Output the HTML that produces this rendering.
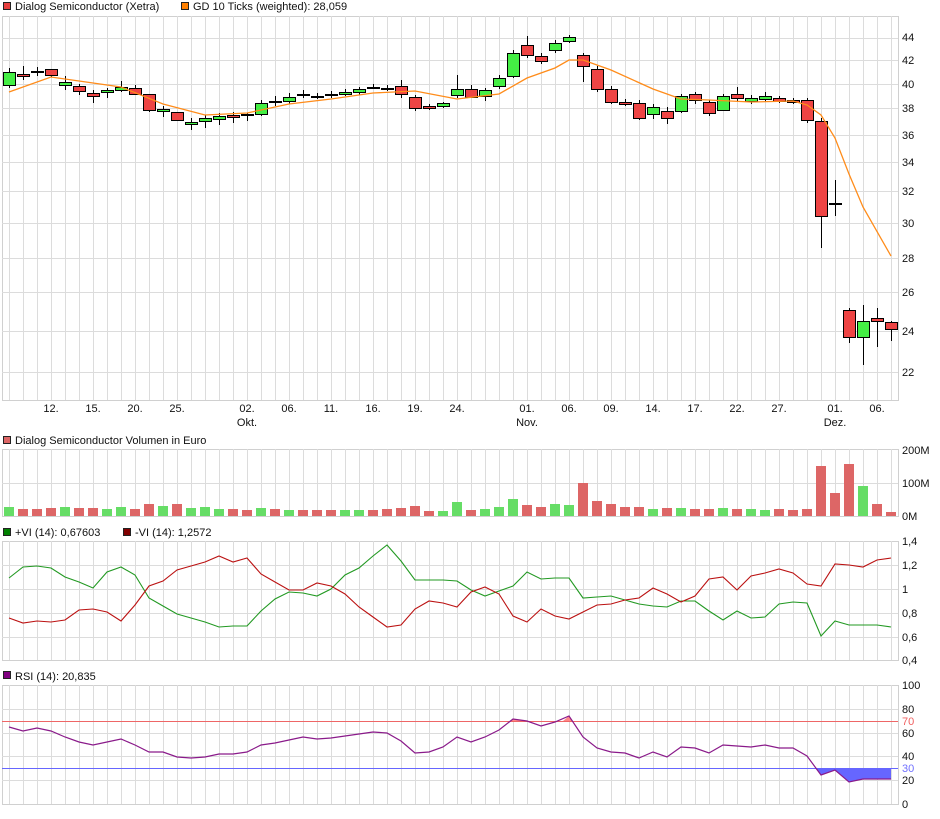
<!DOCTYPE html>
<html><head><meta charset="utf-8"><style>
html,body{margin:0;padding:0;background:#fff;}
body{width:940px;height:814px;overflow:hidden;font-family:"Liberation Sans",sans-serif;}
svg text{font-family:"Liberation Sans",sans-serif;font-size:11px;fill:#111;}
</style></head><body>
<svg id="c" width="940" height="814" xmlns="http://www.w3.org/2000/svg">
<g id="grid" stroke="#dcdcdc" stroke-width="1" fill="none"></g>
<g id="lay"></g>
<!-- legends -->
<rect x="3.5" y="2.5" width="7" height="7" fill="#e84040" stroke="#222"/>
<text x="15" y="10">Dialog Semiconductor (Xetra)</text>
<rect x="181.5" y="2.5" width="7" height="7" fill="#ff8000" stroke="#222"/>
<text x="193" y="10">GD 10 Ticks (weighted): 28,059</text>
<rect x="3.5" y="436.5" width="7" height="7" fill="#dd6666" stroke="#222"/>
<text x="15" y="444">Dialog Semiconductor Volumen in Euro</text>
<rect x="3.5" y="528.5" width="7" height="7" fill="#008000" stroke="#222"/>
<text x="15" y="536">+VI (14): 0,67603</text>
<rect x="123.5" y="528.5" width="7" height="7" fill="#800000" stroke="#222"/>
<text x="135" y="536">-VI (14): 1,2572</text>
<rect x="3.5" y="671.5" width="7" height="7" fill="#800080" stroke="#222"/>
<text x="15" y="680">RSI (14): 20,835</text>
<!-- main y labels -->
<g>
<text x="902" y="41">44</text><text x="902" y="64">42</text><text x="902" y="88">40</text>
<text x="902" y="112">38</text><text x="902" y="139">36</text><text x="902" y="166">34</text>
<text x="902" y="195">32</text><text x="902" y="227">30</text><text x="902" y="262">28</text>
<text x="902" y="296">26</text><text x="902" y="335">24</text><text x="902" y="376">22</text>
</g>
<g text-anchor="middle">
<text x="51" y="412" text-anchor="middle">12.</text><text x="93" y="412" text-anchor="middle">15.</text>
<text x="135" y="412" text-anchor="middle">20.</text><text x="177" y="412" text-anchor="middle">25.</text>
<text x="247" y="412" text-anchor="middle">02.</text><text x="289" y="412" text-anchor="middle">06.</text>
<text x="331" y="412" text-anchor="middle">11.</text><text x="373" y="412" text-anchor="middle">16.</text>
<text x="415" y="412" text-anchor="middle">19.</text><text x="457" y="412" text-anchor="middle">24.</text>
<text x="527" y="412" text-anchor="middle">01.</text><text x="569" y="412" text-anchor="middle">06.</text>
<text x="611" y="412" text-anchor="middle">09.</text><text x="653" y="412" text-anchor="middle">14.</text>
<text x="695" y="412" text-anchor="middle">17.</text><text x="737" y="412" text-anchor="middle">22.</text>
<text x="779" y="412" text-anchor="middle">27.</text><text x="835" y="412" text-anchor="middle">01.</text>
<text x="877" y="412" text-anchor="middle">06.</text>
<text x="247" y="426" text-anchor="middle">Okt.</text><text x="527" y="426" text-anchor="middle">Nov.</text>
<text x="835" y="426" text-anchor="middle">Dez.</text>
</g>
<text x="902" y="454">200M</text><text x="902" y="487">100M</text><text x="902" y="520">0M</text>
<text x="902" y="545">1,4</text><text x="902" y="569">1,2</text><text x="902" y="593">1</text>
<text x="902" y="617">0,8</text><text x="902" y="641">0,6</text><text x="902" y="664">0,4</text>
<text x="902" y="689">100</text><text x="902" y="713">80</text><text x="902" y="725" style="fill:#f06060">70</text>
<text x="902" y="737">60</text><text x="902" y="760">40</text><text x="902" y="772" style="fill:#7070ff">30</text>
<text x="902" y="784">20</text><text x="902" y="808">0</text>
</svg>
<script>
var NS="http://www.w3.org/2000/svg",svg=document.getElementById('c'),G=document.getElementById('grid'),L=document.getElementById('lay');
function el(p,t,a){var e=document.createElementNS(NS,t);for(var k in a)e.setAttribute(k,a[k]);p.appendChild(e);return e;}
var panels=[[16,400,[38,60,84,108,135,162,191,223,258,292,331,372]],[449,516,[483]],[541,660,[565,589,613,637]],[685,804,[709,733,756,780]]];
panels.forEach(function(p){
 el(G,'rect',{x:2.5,y:p[0]+.5,width:896,height:p[1]-p[0],stroke:'#d0d0d0'});
 for(var i=0;i<64;i++){var x=9+14*i+.5;el(G,'line',{x1:x,x2:x,y1:p[0],y2:p[1]});}
 p[2].forEach(function(y){el(G,'line',{x1:2,x2:898,y1:y+.5,y2:y+.5});});
});
// candles: [open,close,high,low] in y coords
var C=[[85,72,68,88],[74,76,66,80],[71,72,67,76],[69,75,69,77],[85,82,76,90],[86,91,84,95],[93,96,90,103],[92,90,88,98],[90,87,81,92],[88,94,85,95],
[94,110,94,112],[111,109,106,117],[112,120,112,121],[124,122,118,130],[121,118,115,128],[119,116,113,125],[115,117,112,123],[114,115,113,121],[114,103,100,116],[101,102,96,106],
[101,97,93,104],[94,95,90,98],[96,96,93,99],[94,94,91,98],[94,92,89,96],[92,89,87,95],[87,87,84,89],[88,88,85,91],[86,94,80,98],[97,108,95,111],
[106,108,104,110],[106,103,102,108],[95,89,75,98],[89,97,85,98],[96,90,88,101],[86,78,75,89],[76,53,50,78],[45,55,36,58],[56,61,53,64],[50,43,40,53],
[41,37,35,43],[55,66,53,82],[69,89,66,92],[89,102,86,104],[102,104,99,106],[103,118,100,120],[114,107,104,119],[111,118,107,124],[111,96,94,113],[94,100,92,104],
[102,113,100,116],[110,96,94,111],[94,98,87,102],[101,98,95,104],[99,96,92,102],[98,101,96,103],[100,102,98,104],[100,120,98,123],[121,216,118,248],[203,203,180,216],
[310,337,308,343],[337,321,305,365],[318,321,308,347],[322,329,321,341]];
var ma="9,92 51,77 79,81 121,87 163,104 205,115 247,113 289,104 331,99 373,93 415,91 457,99 499,94 527,78 555,68 569,60 583,60 611,70 653,89 681,99 709,100 751,102 793,101 807,105 821,115 835,138 849,174 863,207 891,256";
C.forEach(function(c,i){var x=9+14*i;el(L,'line',{x1:x+.5,x2:x+.5,y1:c[2],y2:c[3],stroke:'#000'});
 var t=Math.min(c[0],c[1]),h=Math.abs(c[0]-c[1]);
 if(h<2){el(L,'rect',{x:x-6,y:t,width:13,height:2,fill:'#000'});}
 else el(L,'rect',{x:x-5.5,y:t+.5,width:12,height:h,fill:c[1]<c[0]?'#44ee44':'#ee4444',stroke:'#000'});});
el(L,'polyline',{points:ma,fill:'none',stroke:'#ff8c1a','stroke-width':1.3});
// volume
var V=[9,7,7,8,9,8,8,7,9,7,12,10,12,8,9,7,7,6,8,7,6,6,6,6,6,6,6,7,8,10,5,5,14,6,7,9,17,11,9,12,11,33,15,12,9,9,7,8,8,7,7,8,7,7,6,7,6,7,50,23,52,30,12,4];
C.forEach(function(c,i){var x=9+14*i;el(L,'rect',{x:x-5,y:516-V[i],width:10,height:V[i],fill:c[1]<c[0]?'#66dd66':'#dd6666'});});
// VI
var gy=[578,567,566,568,577,582,588,572,567,575,598,606,614,618,622,627,626,626,611,599,592,593,596,589,575,568,556,545,561,580,580,580,581,590,596,591,586,572,579,578,578,598,597,596,600,604,606,607,601,601,611,620,611,618,617,604,602,603,636,621,625,625,625,627];
var ry=[618,623,621,622,620,610,609,612,621,605,586,581,570,566,562,556,562,558,574,582,590,590,583,586,594,607,617,627,625,609,601,603,607,592,587,594,616,622,609,616,619,612,605,604,600,598,588,594,602,596,579,577,590,576,573,569,573,584,586,564,565,567,560,558];
function pts(a){return a.map(function(y,i){return (9+14*i)+','+y;}).join(' ');}
el(L,'polyline',{points:pts(gy),fill:'none',stroke:'#229922','stroke-width':1.1});
el(L,'polyline',{points:pts(ry),fill:'none',stroke:'#bb1111','stroke-width':1.1});
// RSI
var R=[727,731,728,731,737,742,745,742,739,745,752,752,757,758,757,754,754,752,745,743,740,737,739,738,736,734,732,733,741,753,752,747,737,742,737,730,719,721,726,722,716,737,748,752,753,758,752,757,747,748,753,745,746,747,745,748,748,756,775,770,782,779,779,779];
el(L,'polygon',{points:'815,768 821,775 835,770 849,782 863,779 877,779 891,779 891,768',fill:'#6666ff'});
el(L,'polygon',{points:'510,721 513,719 527,721 510,721',fill:'#ff8888'});
el(L,'polygon',{points:'563,721 569,716 573,721',fill:'#ff8888'});
el(L,'line',{x1:2,x2:898,y1:721.5,y2:721.5,stroke:'#ee6666'});
el(L,'line',{x1:2,x2:898,y1:768.5,y2:768.5,stroke:'#6666ff'});
el(L,'polyline',{points:pts(R),fill:'none',stroke:'#8a1a8a','stroke-width':1.2});
</script>
</body></html>
